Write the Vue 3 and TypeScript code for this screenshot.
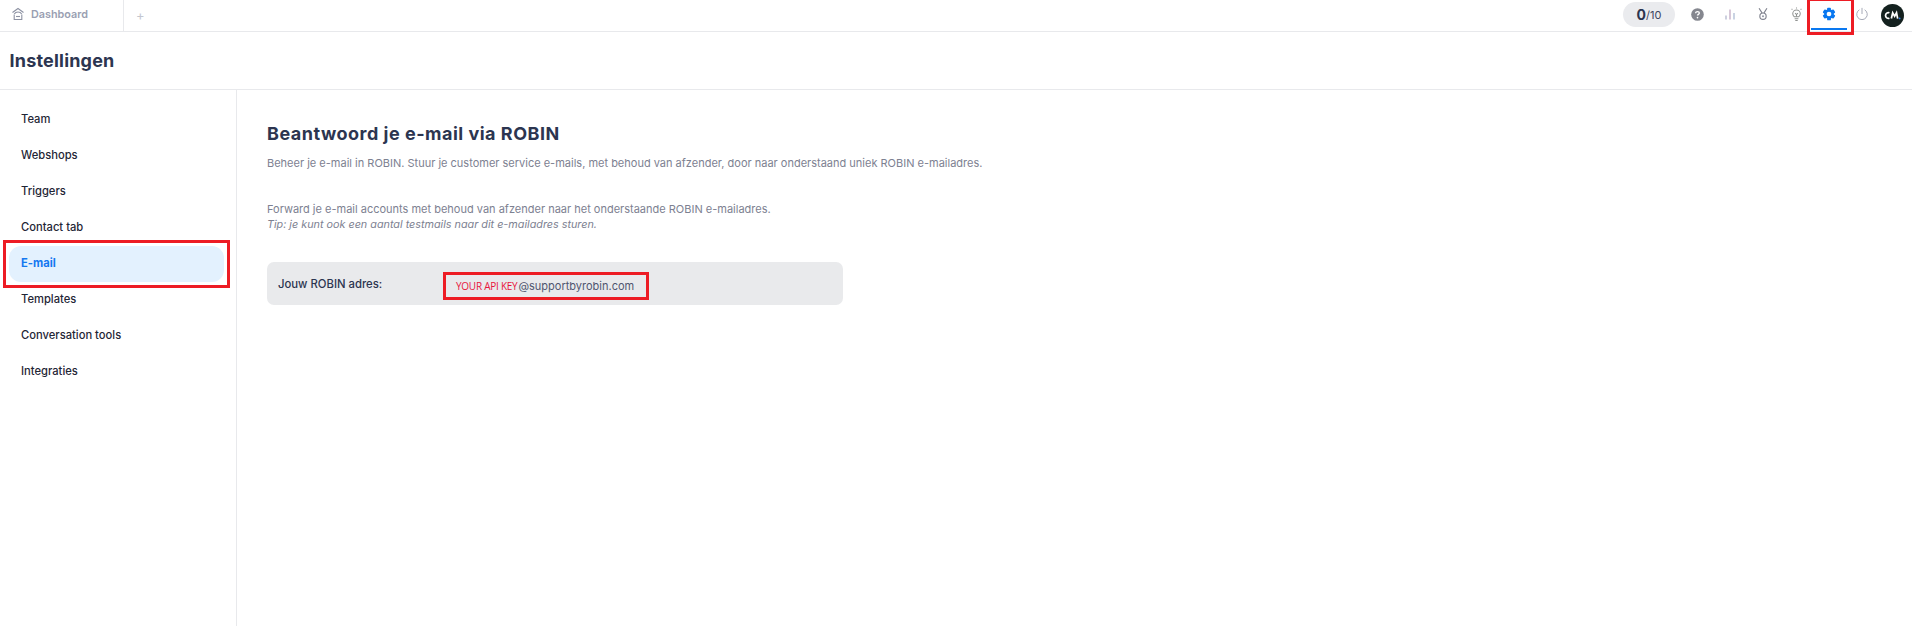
<script setup lang="ts">
const navItems: string[] = ['Team', 'Webshops', 'Triggers', 'Contact tab', 'E-mail', 'Templates', 'Conversation tools', 'Integraties']
</script>

<template>
  <div class="app">
    <header class="topbar">
      <div class="tab">
        <svg class="home" viewBox="0 0 14 14" width="14" height="14" fill="none" stroke="#8d92a3" stroke-width="1.1">
          <path d="M1.5 5.500 7 1.500l5.500 4" />
          <path d="M3.300 7c.7-1.200 2-2 3.700-2s3 .8 3.700 2" />
          <path d="M3.200 7.500v5h7.600v-5" />
          <path d="M5 9.500h4" />
        </svg>
        <span>Dashboard</span>
      </div>
      <span class="plus">+</span>
      <div class="tools">
        <div class="counter"><b>0</b><span>/10</span></div>
        <span class="tool">
          <svg viewBox="0 0 14 14" width="13" height="13">
            <circle cx="7" cy="7" r="6.800" fill="#85878f" />
            <path d="M5 5.600c0-1.100.9-1.800 2-1.800s2 .7 2 1.700c0 1.400-2 1.300-2 2.700" fill="none" stroke="#fff" stroke-width="1.400" />
            <circle cx="7" cy="10.300" r=".9" fill="#fff" />
          </svg>
        </span>
        <span class="tool">
          <svg viewBox="0 0 14 14" width="14" height="14" stroke-width="1.100" fill="none">
            <path d="M3 12.500V8.500" stroke="#a3a9c4" />
            <path d="M7 12.500V2.500" stroke="#b79ab8" />
            <path d="M11 12.500V6" stroke="#9fb0cc" />
          </svg>
        </span>
        <span class="tool">
          <svg viewBox="0 0 16 16" width="14" height="16" fill="none" stroke="#80838f" stroke-width="1.300">
            <path d="M3.500 1.500 7 7M12.500 1.500 9 7" />
            <circle cx="8" cy="10.500" r="3.600" />
            <circle cx="8" cy="10.500" r="1.200" fill="#9498a6" stroke="none" />
          </svg>
        </span>
        <span class="tool">
          <svg viewBox="0 0 16 16" width="15" height="15" fill="none" stroke="#8f9290" stroke-width="1.100">
            <path d="M5.700 10.500C4.700 9.600 4 8.600 4 7.200a4 4 0 0 1 8 0c0 1.400-.7 2.400-1.700 3.300z" />
            <path d="M6 12.500h4M6.700 14.500h2.600M8 .5v1M2.800 2l.8.8M13.200 2l-.8.8M6.500 6.500 8 8l1.500-1.500M8 8v2.500" />
          </svg>
        </span>
        <span class="tool active">
          <svg viewBox="0 0 16 16" width="14" height="14">
            <g fill="#0a78f0">
              <rect x="5.800" y="0.800" width="4.400" height="14.400" rx="1" />
              <rect x="5.800" y="0.800" width="4.400" height="14.400" rx="1" transform="rotate(60 8 8)" />
              <rect x="5.800" y="0.800" width="4.400" height="14.400" rx="1" transform="rotate(120 8 8)" />
              <circle cx="8" cy="8" r="5.500" />
            </g>
            <circle cx="8" cy="8" r="2.700" fill="#fff" />
          </svg>
        </span>
        <span class="tool">
          <svg viewBox="0 0 16 16" width="14" height="14" fill="none" stroke="#9a9fae" stroke-width="1">
            <path d="M5 3.200a6 6 0 1 0 6 0" />
            <path d="M8 1v7" />
          </svg>
        </span>
        <span class="avatar">
          <svg viewBox="0 0 24 24" width="23" height="23">
            <circle cx="12" cy="12" r="12" fill="#14211f" />
            <path d="M8.800 9.200a3 3 0 1 0 0 5.600" fill="none" stroke="#fff" stroke-width="1.800" />
            <path d="M10.800 15.200l1.400-6 2 3.600 2-3.600 1.200 6" fill="none" stroke="#fff" stroke-width="1.800" />
            <circle cx="19.500" cy="15" r=".9" fill="#2f7ff0" />
          </svg>
        </span>
      </div>
    </header>
    <div class="title-bar"><h1>Instellingen</h1></div>
    <div class="body">
      <nav class="side">
        <a v-for="item in navItems" :key="item" class="nav" :class="{ current: item === 'E-mail' }">{{ item }}</a>
      </nav>
      <main class="main">
        <h2>Beantwoord je e-mail via ROBIN</h2>
        <p class="lead">Beheer je e-mail in ROBIN. Stuur je customer service e-mails, met behoud van afzender, door naar onderstaand uniek ROBIN e-mailadres.</p>
        <p class="fwd">Forward je e-mail accounts met behoud van afzender naar het onderstaande ROBIN e-mailadres.<br /><em>Tip: je kunt ook een aantal testmails naar dit e-mailadres sturen.</em></p>
        <div class="address">
          <span class="addr-label">Jouw ROBIN adres:</span>
          <span class="addr-value"><span class="key">YOUR API KEY</span>@supportbyrobin.com</span>
        </div>
      </main>
    </div>
  </div>
</template>

<style>
html, body { margin: 0; background: #fff; }
</style>

<style scoped>
.app {
  width: 1912px;
  height: 626px;
  display: flex;
  flex-direction: column;
  overflow: hidden;
  font-family: Inter, "Liberation Sans", sans-serif;
  color: #2c3550;
  background: #fff;
}
.topbar {
  height: 32px;
  box-sizing: border-box;
  flex: none;
  display: flex;
  align-items: center;
  border-bottom: 1px solid #e8e9ec;
}
.tab {
  width: 124px;
  height: 31px;
  box-sizing: border-box;
  padding: 0 0 3px 11px;
  display: flex;
  align-items: center;
  gap: 6px;
  border-right: 1px solid #e8e9ec;
  font-size: 10.800px;
  font-weight: 600;
  color: #9a9fb2;
}
.plus { margin: -2px 0 0 12px; font-size: 13px; color: #c4c6cf; }
.tools {
  margin-left: auto;
  display: flex;
  align-items: center;
  height: 31px;
  padding-right: 8px;
}
.counter {
  width: 52px;
  height: 25px;
  border-radius: 13px;
  background: #eaebee;
  display: flex;
  align-items: center;
  justify-content: center;
  font-size: 11px;
  margin: -2px 5.500px 0 0;
}
.counter b { font-size: 14px; font-weight: 700; color: #2c3550; }
.counter span { color: #3c4560; }
.tool {
  width: 33px;
  height: 28px;
  display: flex;
  align-items: center;
  justify-content: center;
  margin-top: -3px;
  position: relative;
}
.tool.active::before {
  content: "";
  position: absolute;
  left: -1.500px;
  right: -1.500px;
  top: 28px;
  height: 2px;
  background: #0a78f0;
}
.tool.active::after {
  content: "";
  position: absolute;
  left: -5.500px;
  right: -8.500px;
  top: -2px;
  height: 37px;
  box-sizing: border-box;
  border: 3px solid #ed1c24;
}
.avatar { display: flex; margin-left: 2.500px; margin-top: -1px; }
.title-bar {
  height: 58px;
  box-sizing: border-box;
  flex: none;
  display: flex;
  align-items: center;
  padding-left: 9.500px;
  border-bottom: 1px solid #e8e9ec;
}
h1 {
  margin: 0;
  font-size: 18px;
  font-weight: 700;
  letter-spacing: 0.2px;
  color: #2c3550;
}
.body { flex: 1; display: flex; min-height: 0; }
.side {
  width: 237px;
  flex: none;
  box-sizing: border-box;
  border-right: 1px solid #e8e9ec;
  padding: 12px 12px 0 9px;
  display: flex;
  flex-direction: column;
}
.nav {
  height: 36px;
  flex: none;
  box-sizing: border-box;
  display: flex;
  align-items: center;
  padding: 0 0 2px 12px;
  font-size: 11.200px;
  font-weight: 500;
  color: #1f2636;
  position: relative;
}
.nav.current {
  background: #e3f1fe;
  border-radius: 12px;
  color: #1478f0;
  font-weight: 700;
}
.nav.current::after {
  content: "";
  position: absolute;
  inset: -6px;
  border: 3px solid #ed1c24;
}
.main { flex: 1; padding: 33px 30px 0; }
h2 {
  margin: 0;
  font-size: 18px;
  font-weight: 700;
  line-height: 22px;
  letter-spacing: 0.5px;
  color: #2c3550;
}
.lead, .fwd {
  font-size: 11px;
  color: #7d8191;
  margin: 0;
}
.lead { margin-top: 11px; line-height: 15px; }
.fwd { margin-top: 31px; line-height: 14.500px; }
.fwd em { font-size: 10.800px; }
.address {
  margin-top: 30px;
  width: 576px;
  height: 43px;
  box-sizing: border-box;
  background: #e9eaec;
  border-radius: 7px;
  display: flex;
  align-items: center;
  padding-left: 11px;
  font-size: 11.300px;
}
.addr-label { width: 178px; margin-top: 1px; color: #2c3550; font-weight: 500; }
.addr-value {
  color: #505670;
  display: flex;
  align-items: baseline;
  position: relative;
  font-size: 11px;
  line-height: 16px;
  margin-top: 5px;
}
.addr-value::before {
  content: "";
  position: absolute;
  left: -13px;
  right: -15px;
  top: -6px;
  bottom: -6px;
  border: 3px solid #ed1c24;
}
.key {
  font-family: "Open Sans", sans-serif;
  font-size: 10px;
  letter-spacing: -0.25px;
  color: #e8163c;
  margin-right: 1px;
}
</style>
